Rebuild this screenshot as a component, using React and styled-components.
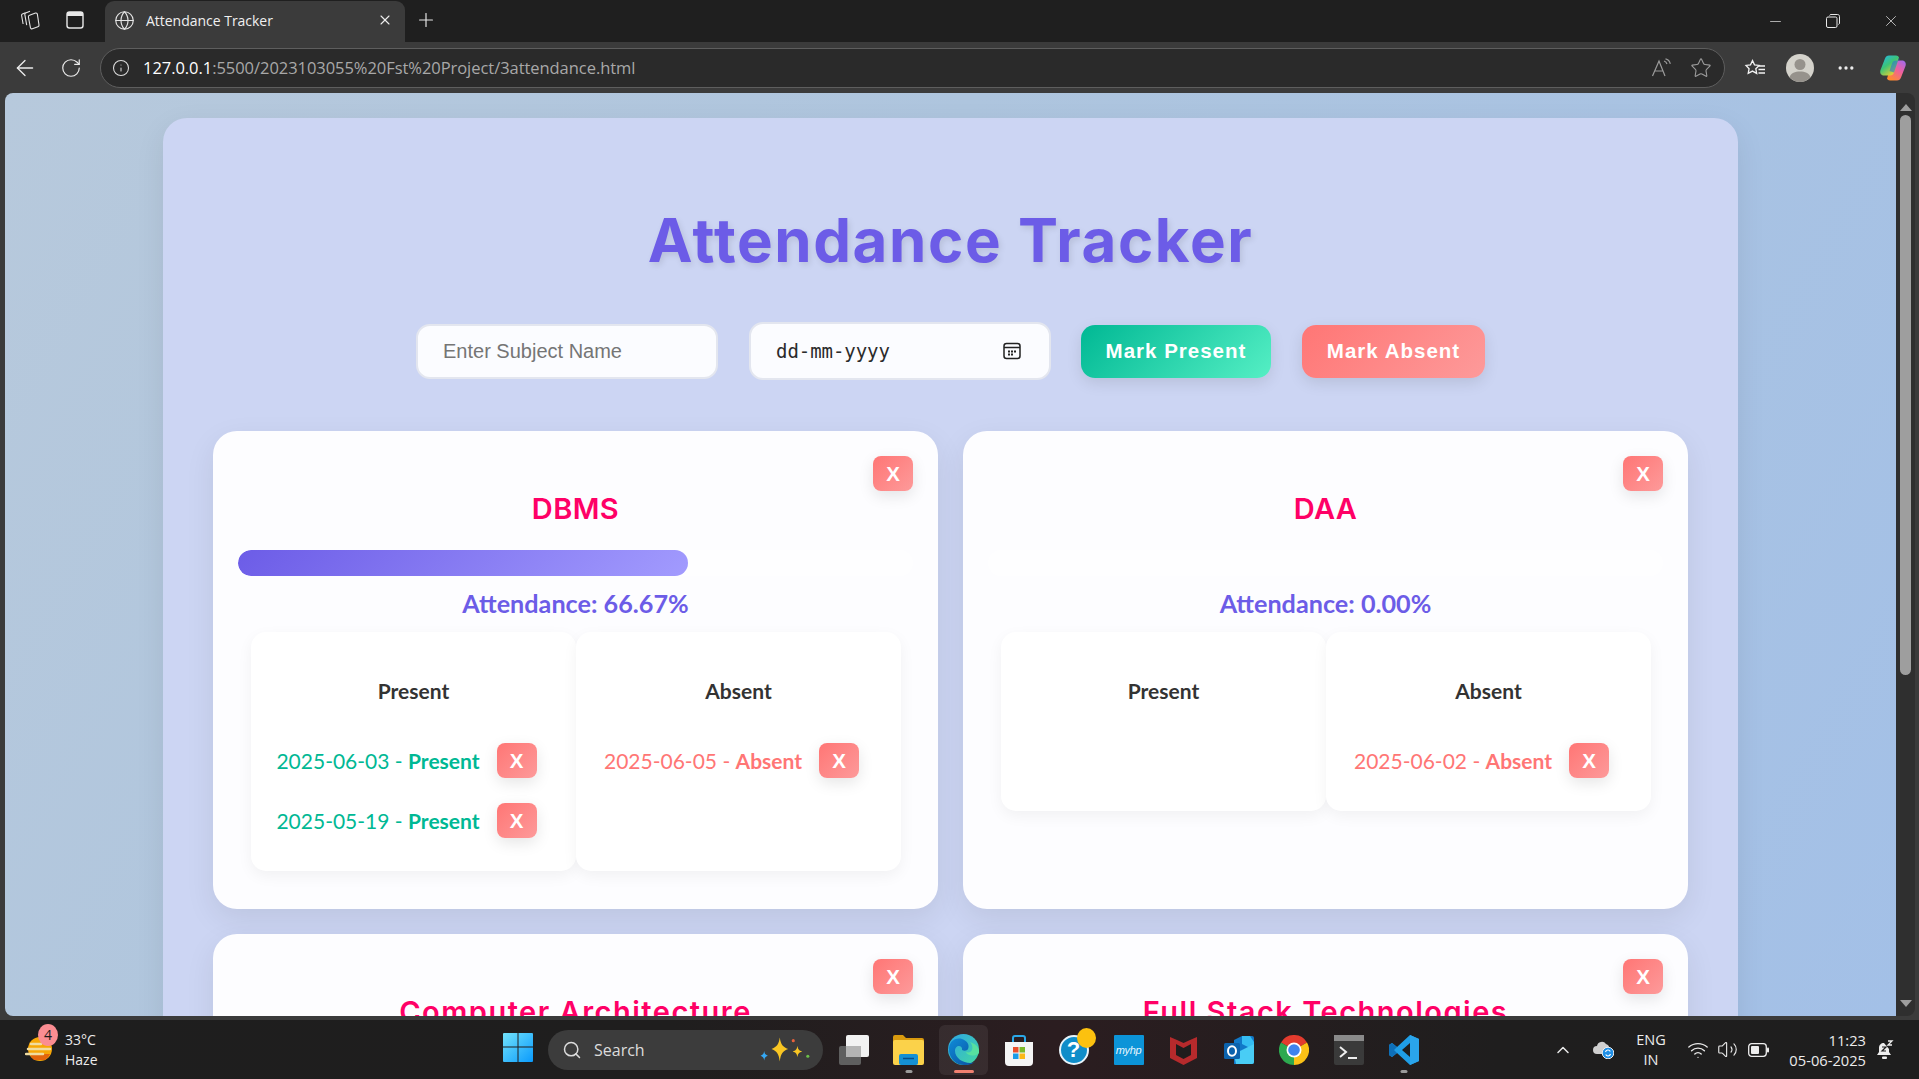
import styled, { createGlobalStyle } from "styled-components";
import {
  ArrowLeft, RotateCw, Info, Globe, X, Plus, Star, Minus, Search,
  ChevronUp, Wifi, Volume2, MoreHorizontal,
} from "lucide-react";

const GlobalStyle = createGlobalStyle`
  * { box-sizing: border-box; }
  html, body { margin: 0; height: 100%; overflow: hidden; }
  body { font-family: "Noto Sans", sans-serif; background: #3b3b3b; }
  #root { height: 100vh; }
`;

const Shell = styled.div`
  height: 100vh;
  display: flex;
  flex-direction: column;
`;

/* browser chrome */
const TabStrip = styled.div`
  height: 42px;
  flex: none;
  background: #1f1f1f;
  display: flex;
  align-items: stretch;
  color: #e6e6e6;
`;

const StripIcon = styled.div`
  width: ${(p) => p.$w || 45}px;
  display: flex;
  align-items: center;
  justify-content: center;
  flex: none;
  padding-bottom: 2px;
`;

const ActiveTab = styled.div`
  width: 300px;
  margin-left: ${(p) => p.$ml || 0}px;
  margin-top: 1px;
  background: #3b3b3b;
  border-radius: 9px 9px 0 0;
  display: flex;
  align-items: center;
  padding: 0 12px 3px 9px;
  flex: none;
`;

const TabTitle = styled.span`
  font-family: "Open Sans", sans-serif;
  font-size: 14px;
  letter-spacing: -0.02px;
  color: #f0f0f0;
  margin-left: 11px;
  flex: 1;
`;

const WindowButtons = styled.div`
  margin-left: auto;
  margin-right: -1px;
  display: flex;
  align-items: center;
`;

const WindowButton = styled.div`
  width: 58px;
  height: 40px;
  display: flex;
  align-items: center;
  justify-content: center;
`;

const Toolbar = styled.div`
  height: 51px;
  flex: none;
  background: #3b3b3b;
  display: flex;
  align-items: center;
  color: #ececec;
`;

const NavButton = styled.div`
  width: ${(p) => p.$w || 45}px;
  flex: none;
  display: flex;
  align-items: center;
  justify-content: center;
`;

const AddressBar = styled.div`
  width: 1625px;
  height: 40px;
  margin-left: 8px;
  flex: none;
  background: #2a2a2a;
  border: 1px solid #5e5e5e;
  border-radius: 20px;
  display: flex;
  align-items: center;
  padding-left: 11px;
  padding-right: 12px;
`;

const Url = styled.div`
  font-family: "Open Sans", sans-serif;
  font-size: 16.5px;
  letter-spacing: -0.05px;
  margin-left: 13px;
  color: #a8a8a8;
  flex: 1;
  white-space: nowrap;
  b { font-weight: 400; color: #fff; }
`;

const AddressIcons = styled.div`
  display: flex;
  align-items: center;
  gap: 17px;
  color: #9c9c9c;
`;

const ToolIcons = styled.div`
  display: flex;
  align-items: center;
  margin-left: 8px;
`;

const ToolIcon = styled.div`
  width: ${(p) => p.$w || 46}px;
  display: flex;
  justify-content: center;
  align-items: center;
`;

/* viewport */
const ViewRow = styled.div`
  flex: 1;
  min-height: 0;
  display: flex;
  padding: 0 4px 0 5px;
`;

const Viewport = styled.div`
  flex: 1;
  min-width: 0;
  overflow: hidden;
  border-radius: 8px 0 0 8px;
  background: linear-gradient(120deg, #b7c9dc 0%, #aec5de 40%, #a3c0e7 100%);
  padding-top: 25px;
`;

const ScrollTrack = styled.div`
  width: 19px;
  flex: none;
  background: #2f2f2f;
  border-radius: 0 8px 8px 0;
  display: flex;
  flex-direction: column;
  align-items: center;
  padding: 11px 0 9px;
`;

const ScrollArrow = styled.div`
  width: 0;
  height: 0;
  border-left: 6.5px solid transparent;
  border-right: 6.5px solid transparent;
  ${(p) => (p.$down ? "border-top: 7px solid #9e9e9e;" : "border-bottom: 7px solid #9e9e9e;")}
  ${(p) => p.$down && "margin-top: auto;"}
`;

const ScrollThumb = styled.div`
  width: 11px;
  height: 560px;
  margin-top: 4px;
  background: #9e9e9e;
  border-radius: 6px;
`;

/* the page */
const Panel = styled.main`
  width: 1575px;
  margin: 0 auto;
  background: #ccd5f3;
  border-radius: 24px 24px 0 0;
  padding: 50px 50px 60px;
  box-shadow: 0 10px 30px rgba(0, 0, 0, 0.08);
`;

const PageTitle = styled.h1`
  margin: 0 0 10px;
  text-align: center;
  font-family: Inter, sans-serif;
  font-size: 60px;
  font-weight: 700;
  line-height: 144px;
  height: 144px;
  letter-spacing: 1.6px;
  color: #6c5ce7;
  text-shadow: 2px 3px 6px rgba(0, 0, 0, 0.1);
`;

const Controls = styled.div`
  display: flex;
  justify-content: center;
  align-items: center;
  gap: 31px;
  height: 58px;
`;

const SubjectInput = styled.input`
  width: 302px;
  height: 55px;
  padding: 0 25px;
  border: 2px solid #e3e6ef;
  border-radius: 14px;
  background: #fbfcff;
  font-family: "Liberation Sans", Arial, sans-serif;
  font-size: 20px;
  outline: none;
  &::placeholder { color: #757575; opacity: 1; }
`;

const DateField = styled.div`
  width: 302px;
  height: 58px;
  margin-right: -1px;
  padding: 0 28px 0 25px;
  border: 2px solid #e3e6ef;
  border-radius: 14px;
  background: #fbfcff;
  display: flex;
  align-items: center;
  justify-content: space-between;
  font-family: "DejaVu Sans Mono", "Liberation Mono", monospace;
  font-size: 19px;
  letter-spacing: -0.05px;
  color: #2b2b2b;
`;

const ActionButton = styled.button`
  width: ${(p) => p.$w}px;
  height: 53px;
  border: none;
  border-radius: 14px;
  background: linear-gradient(135deg, ${(p) => p.$from}, ${(p) => p.$to});
  color: #fff;
  font-family: "Liberation Sans", Arial, sans-serif;
  font-weight: 700;
  font-size: 20.5px;
  letter-spacing: 1px;
  box-shadow: 0 5px 15px rgba(0, 0, 0, 0.1);
`;

const CardGrid = styled.div`
  display: grid;
  grid-template-columns: 1fr 1fr;
  gap: 25px;
  margin-top: 51px;
`;

const Card = styled.section`
  position: relative;
  background: #fdfdff;
  border-radius: 24px;
  padding: 25px 25px 38px;
  box-shadow: 0 10px 30px rgba(0, 0, 0, 0.08);
`;

const RemoveButton = styled.button`
  width: 40px;
  height: 35px;
  padding: 0;
  border: none;
  border-radius: 8px;
  background: linear-gradient(135deg, #ff7675, #fd9a9a);
  color: #fff;
  font-family: "Liberation Sans", Arial, sans-serif;
  font-weight: 700;
  font-size: 20.5px;
  flex: none;
  box-shadow: 0 5px 15px rgba(0, 0, 0, 0.1);
`;

const CardRemove = styled(RemoveButton)`
  position: absolute;
  top: 25px;
  right: 25px;
`;

const CardTitle = styled.h2`
  margin: 33px 0 0;
  text-align: center;
  font-family: Inter, sans-serif;
  font-size: 29px;
  font-weight: 600;
  line-height: 40px;
  letter-spacing: ${(p) => (p.$long ? 1.5 : 0.4)}px;
  color: #ff0066;
`;

const Track = styled.div`
  height: 26px;
  margin-top: 21px;
  border-radius: 13px;
  background: #fefeff;
  overflow: hidden;
`;

const Fill = styled.div`
  height: 100%;
  border-radius: 13px;
  background: linear-gradient(135deg, #6c5ce7, #a29bfe);
`;

const Percent = styled.p`
  margin: 12px 0 0;
  text-align: center;
  font-family: Lato, sans-serif;
  font-size: 25.2px;
  font-weight: 700;
  line-height: 30px;
  color: #6c5ce7;
`;

const Lists = styled.div`
  display: grid;
  grid-template-columns: 1fr 1fr;
  margin: 14px 12px 0 13px;
`;

const ListBox = styled.div`
  background: #fff;
  border-radius: 15px;
  padding: 44px 0 33px;
  box-shadow: 0 5px 15px rgba(0, 0, 0, 0.05);
`;

const ListTitle = styled.h3`
  margin: 0 0 37px;
  text-align: center;
  font-family: Lato, sans-serif;
  font-size: 21px;
  font-weight: 700;
  line-height: 30px;
  color: #333;
`;

const Entry = styled.div`
  display: flex;
  align-items: center;
  justify-content: center;
  gap: 17px;
  padding-right: 14px;
  height: 35px;
  & + & { margin-top: 25px; }
`;

const EntryText = styled.span`
  font-family: Lato, sans-serif;
  font-size: 21px;
  white-space: nowrap;
  color: ${(p) => p.$color};
  b { font-weight: 700; }
`;

/* taskbar */
const Taskbar = styled.footer`
  height: 63px;
  flex: none;
  border-top: 4px solid #3b3b3b;
  background: linear-gradient(90deg, #1e1e1e 0%, #1f1e1e 35%, #2b1d20 55%, #1f1e1e 78%, #1e1e1e 100%);
  display: flex;
  align-items: center;
  color: #e8e8e8;
  font-family: "Open Sans", sans-serif;
`;

const Weather = styled.div`
  width: 503px;
  flex: none;
  display: flex;
  align-items: center;
  padding-left: 25px;
  gap: 12px;
`;

const WeatherIcon = styled.div`
  position: relative;
  width: 28px;
  height: 28px;
`;

const Badge = styled.span`
  position: absolute;
  top: -12px;
  left: 13px;
  width: 20px;
  height: 22px;
  border-radius: 50%;
  background: #fb8d92;
  color: #1b1b1b;
  font-size: 14px;
  line-height: 22px;
  text-align: center;
`;

const TwoLines = styled.div`
  font-size: ${(p) => p.$size || 14}px;
  line-height: 20px;
  text-align: ${(p) => p.$align || "left"};
  color: #ececec;
  white-space: nowrap;
`;

const StartIcon = styled.div`
  width: 45px;
  flex: none;
`;

const SearchPill = styled.div`
  width: 275px;
  height: 40px;
  flex: none;
  border-radius: 20px;
  background: #3c3c3c;
  display: flex;
  align-items: center;
  padding: 0 10px 0 14px;
  color: #dcdcdc;
  font-size: 16px;
  gap: 12px;
`;

const PillLabel = styled.span`
  flex: 1;
`;

const TaskRow = styled.div`
  display: flex;
  margin-left: 3px;
`;

const TaskIcon = styled.div`
  position: relative;
  width: 55px;
  height: 50px;
  display: flex;
  align-items: center;
  justify-content: center;
  border-radius: 6px;
  ${(p) => p.$active && "background: rgba(255,255,255,0.07); width: 49px; margin: 0 3px;"}
  &::after {
    content: "";
    position: absolute;
    bottom: 2px;
    left: 50%;
    transform: translateX(-50%);
    height: 3px;
    border-radius: 2px;
    width: ${(p) => (p.$active ? 20 : p.$open ? 7 : 0)}px;
    background: ${(p) => (p.$active ? "#f08070" : "#9a9a9a")};
  }
`;

const Tray = styled.div`
  margin-left: auto;
  padding-right: 21px;
  display: flex;
  align-items: center;
`;

const TrayCell = styled.div`
  width: ${(p) => p.$w}px;
  margin-left: ${(p) => p.$ml || 0}px;
  flex: none;
  display: flex;
  justify-content: ${(p) => (p.$end ? "flex-end" : "center")};
`;

/* drawn icons */
const TabStack = () => (
  <svg width="22" height="22" viewBox="0 0 22 22" fill="none" stroke="#e4e4e4" strokeWidth="1.1">
    <path d="M6.500 3.800 3.400 5.100c-.6.3-.9.8-.8 1.400l1.500 8.500" />
    <path d="M11 2.300 6.600 4c-.6.3-.9.800-.8 1.400l1.900 10.800" />
    <path d="M10.500 6.300l6-2.200c.9-.3 1.700.3 1.900 1.200L20 16c.1.900-.3 1.500-1.100 1.800l-5.500 2c-1 .3-1.800-.1-2-1.100L9.400 8c-.2-.8.2-1.400 1.100-1.700z" />
  </svg>
);

const TabSide = () => (
  <svg width="20" height="20" viewBox="0 0 20 20" fill="none">
    <rect x="2" y="2" width="16" height="16" rx="2.500" stroke="#e8e8e8" strokeWidth="1.400" />
    <path d="M2 4.500A2.500 2.500 0 0 1 4.500 2h11A2.500 2.500 0 0 1 18 4.500V6H2z" fill="#e8e8e8" />
  </svg>
);

const Restore = () => (
  <svg width="14" height="14" viewBox="0 0 14 14" fill="none" stroke="#e8e8e8" strokeWidth="1">
    <rect x="0.500" y="3" width="10.500" height="10.500" rx="1.500" />
    <path d="M3.500 1.500c.3-.7.8-1 1.500-1h6.500c1.200 0 2 .8 2 2V9c0 .7-.4 1.200-1 1.500" />
  </svg>
);

const ReadAloud = () => (
  <svg width="22" height="20" viewBox="0 0 22 20" fill="none" stroke="#9c9c9c" strokeWidth="1.200">
    <path d="M1.500 18 8 3l6 15M4 13h8" />
    <path d="M13 3c1.600.4 2.600 1.500 3 3M14.500 0.800c2.600.6 4.200 2.400 4.800 5" />
  </svg>
);

const FavoriteList = () => (
  <svg width="22" height="20" viewBox="0 0 22 20" fill="none" stroke="#f2f2f2" strokeWidth="1.300">
    <path d="M8.500 2.500l2 4.300 4.700.6-3.400 3.300.9 4.700-4.200-2.300-4.300 2.300.9-4.700L2 7.400l4.500-.6z" />
    <path d="M14.500 8H21M14.500 11.500H21M14.500 15H21" />
  </svg>
);

const Profile = () => (
  <svg width="28" height="28" viewBox="0 0 28 28">
    <circle cx="14" cy="14" r="14" fill="#d4d2cb" />
    <circle cx="14" cy="10.500" r="5.500" fill="#96928c" />
    <path d="M3.500 23.200C5 19 9 17.500 14 17.500s9 1.500 10.500 5.700A14 14 0 0 1 14 28 14 14 0 0 1 3.500 23.200z" fill="#96928c" />
  </svg>
);

const Copilot = () => (
  <svg width="28" height="26" viewBox="0 0 28 26">
    <defs>
      <linearGradient id="copA" x1="0" y1="0" x2="0.700" y2="1">
        <stop offset="0" stopColor="#23b6f2" />
        <stop offset="0.5" stopColor="#3cc477" />
        <stop offset="1" stopColor="#f5d02c" />
      </linearGradient>
      <linearGradient id="copB" x1="1" y1="0" x2="0.300" y2="1">
        <stop offset="0" stopColor="#9a6cf2" />
        <stop offset="0.5" stopColor="#ee5fa0" />
        <stop offset="1" stopColor="#ff8a30" />
      </linearGradient>
    </defs>
    <path d="M18 25.500h-7c-1.500 0-2.500-.8-3-2l5-15c.6-2 2-3 4-3h6c3 0 4.500 2.500 3.500 5.500L22 22.500c-.7 2-2 3-4 3z" fill="url(#copB)" />
    <path d="M10 .5h7c1.500 0 2.500.8 3 2l-5 15c-.6 2-2 3-4 3H5c-3 0-4.500-2.500-3.500-5.500L6 3.500C6.700 1.500 8 .5 10 .5z" fill="url(#copA)" />
    <path d="M20 2.500c.4 1 .6 2 .6 3H17c-2 0-3.400 1-4 3l-2.500 7.500 4.500 1.500z" fill="#1d6fd8" opacity="0.55" />
  </svg>
);

const CalendarGlyph = () => (
  <svg width="18" height="18" viewBox="0 0 18 18" fill="none">
    <rect x="1" y="1.500" width="16" height="15" rx="2.500" stroke="#222" strokeWidth="1.500" />
    <path d="M1 5.500h16" stroke="#222" strokeWidth="1.500" />
    <path d="M5 8.500h2v2H5zM8 8.500h2v2H8zM11 8.500h2v2h-2zM5 11.500h2v2H5zM8 11.500h2v2H8z" fill="#222" />
  </svg>
);

const HazeSun = () => (
  <svg width="28" height="28" viewBox="0 0 28 28">
    <circle cx="15" cy="13" r="12" fill="#f7a707" />
    <path d="M5 18h20a11 11 0 0 1-5 6H9a11 11 0 0 1-4-6z" fill="#e3650c" />
    <g stroke="#f0dca0" strokeWidth="2.500" strokeLinecap="round">
      <path d="M6 8h10" />
      <path d="M3 13h22" />
      <path d="M1 18h17" />
    </g>
  </svg>
);

const WinLogo = () => (
  <svg width="30" height="30" viewBox="0 0 30 30">
    <defs>
      <linearGradient id="win" x1="0" y1="0" x2="1" y2="1">
        <stop offset="0" stopColor="#72e3fb" />
        <stop offset="1" stopColor="#0a9afc" />
      </linearGradient>
    </defs>
    <path d="M1 1h13.500v13.500H0V2a1 1 0 0 1 1-1zM15.500 1H29a1 1 0 0 1 1 1v12.500H15.500zM0 15.500h14.500V30H1a1 1 0 0 1-1-1zM15.500 15.500H30V29a1 1 0 0 1-1 1H15.500z" fill="url(#win)" />
  </svg>
);

const Sparkles = () => (
  <svg width="54" height="28" viewBox="0 0 52 26">
    <path d="M20 1c1 7 3 9 8 11-5 2-7 4-8 12-1-8-3-10-8-12 5-2 7-4 8-11z" fill="#f9c623" />
    <path d="M37 9c.5 3.500 1.500 4.500 4.500 5.500-3 1-4 2-4.500 5.500-.5-3.500-1.500-4.500-4.500-5.500 3-1 4-2 4.500-5.500z" fill="#f9c623" />
    <path d="M5 14c.4 2.500 1 3.500 3.500 4.500-2.500 1-3.100 2-3.500 4.500-.4-2.500-1-3.500-3.500-4.500 2.500-1 3.100-2 3.500-4.500z" fill="#35a8f4" />
    <circle cx="33" cy="4" r="1.500" fill="#e8613c" />
    <circle cx="47" cy="19" r="1.500" fill="#6cc04a" />
  </svg>
);

const TaskView = () => (
  <svg width="30" height="30" viewBox="0 0 30 30">
    <rect x="0" y="11" width="22" height="19" rx="2" fill="#5f5f5f" />
    <rect x="7" y="0" width="23" height="22" rx="2" fill="#f2f2f2" />
    <rect x="7" y="11" width="15" height="11" fill="#b4b4b4" />
  </svg>
);

const Explorer = () => (
  <svg width="31" height="30" viewBox="0 0 31 30">
    <path d="M0 2a2 2 0 0 1 2-2h8l3 3h16a2 2 0 0 1 2 2v6H0z" fill="#d99a0e" />
    <rect x="0" y="5" width="31" height="25" rx="2" fill="#fbd24a" />
    <rect x="6" y="19" width="19" height="11" rx="2" fill="#1590d4" />
    <path d="M10 23.500h11" stroke="#0a4d88" strokeWidth="1.500" />
  </svg>
);

const Edge = () => (
  <svg width="31" height="31" viewBox="0 0 31 31">
    <defs>
      <linearGradient id="edgeA" x1="0" y1="0" x2="1" y2="1">
        <stop offset="0" stopColor="#2ea6e6" />
        <stop offset="1" stopColor="#43d8a0" />
      </linearGradient>
      <linearGradient id="edgeB" x1="0" y1="0" x2="1" y2="1">
        <stop offset="0" stopColor="#0f8bd8" />
        <stop offset="1" stopColor="#0a4f9e" />
      </linearGradient>
    </defs>
    <circle cx="15.500" cy="15.500" r="15.500" fill="url(#edgeA)" />
    <path d="M1 17C0 8 7 3 14 5c5 1.500 8 6 6 10-1 2-4 2-6 1 1-5-7-6-7 1 0 7 8 12 15 12 3 0 5-1 6-2-4 4-9 4-12 4C8 31 2 25 1 17z" fill="url(#edgeB)" />
    <path d="M31 19c-4 4-12 3-13-1 3 1 5 0 6-2 1-3 0-6-2-8 6 2 10 6 9 11z" fill="#57e0a0" />
  </svg>
);

const Store = () => (
  <svg width="30" height="32" viewBox="0 0 30 32">
    <path d="M9 8V4a2 2 0 0 1 2-2h8a2 2 0 0 1 2 2v4" fill="none" stroke="#2aa8e8" strokeWidth="2" />
    <path d="M1 8h28v20a4 4 0 0 1-4 4H5a4 4 0 0 1-4-4z" fill="#f4f4f4" />
    <rect x="9" y="13" width="5.500" height="5.500" fill="#ea4f2a" />
    <rect x="15.500" y="13" width="5.500" height="5.500" fill="#7cb82a" />
    <rect x="9" y="19.500" width="5.500" height="5.500" fill="#1a9ce8" />
    <rect x="15.500" y="19.500" width="5.500" height="5.500" fill="#fbb818" />
  </svg>
);

const Mcafee = () => (
  <svg width="27" height="30" viewBox="0 0 27 30">
    <path d="M0 2l7 3 6.500 3L20 5l7-3v21l-13.500 7L0 23z" fill="#b62a2c" />
    <path d="M6 9v11l7.500 4 7.500-4V9l-7.500 4z" fill="#1f1c1c" />
  </svg>
);

const Outlook = () => (
  <svg width="30" height="28" viewBox="0 0 30 28">
    <path d="M10 4l8-4h10a2 2 0 0 1 2 2v24a2 2 0 0 1-2 2H10z" fill="#1178c8" />
    <path d="M18 0h8l4 6v8l-12-6z" fill="#35bdf2" />
    <path d="M10 18l20-10v18a2 2 0 0 1-2 2H12z" fill="#49cdf5" />
    <rect x="0" y="7" width="16" height="16" rx="1.500" fill="#0c63ad" />
    <ellipse cx="8" cy="15" rx="4" ry="4.800" fill="none" stroke="#fff" strokeWidth="2" />
  </svg>
);

const Chrome = () => (
  <svg width="30" height="30" viewBox="0 0 30 30">
    <path d="M15 15 2 7.500A15 15 0 0 1 28 7.500z" fill="#e33b2e" />
    <path d="M15 15 28 7.500A15 15 0 0 1 15 30z" fill="#fbc116" />
    <path d="M15 15 15 30A15 15 0 0 1 2 7.500z" fill="#2da94f" />
    <circle cx="15" cy="15" r="7.500" fill="#fff" />
    <circle cx="15" cy="15" r="5.800" fill="#3f83ee" />
  </svg>
);

const Terminal = () => (
  <svg width="30" height="30" viewBox="0 0 30 30" fill="none">
    <rect width="30" height="30" rx="2" fill="#3a3a3a" />
    <rect width="30" height="6" fill="#8a8a8a" />
    <path d="M6 12l6 5-6 5" stroke="#eee" strokeWidth="2" />
    <path d="M14 23h9" stroke="#eee" strokeWidth="2" />
  </svg>
);

const VsCode = () => (
  <svg width="30" height="30" viewBox="0 0 30 30">
    <path d="M21 0l9 4v22l-9 4L8 18l-5 4-3-2v-10l3-2 5 4z" fill="#1f9ee6" />
    <path d="M21 8l-8 7 8 7z" fill="#1e1e1e" />
    <path d="M21 0l9 4v22l-9 4z" fill="#2aa5ec" />
    <path d="M3 8l5 4-3 3 3 3-5 4-3-2v-10z" fill="#0e6fb8" />
  </svg>
);

const HelpBubble = styled.div`
  position: relative;
  width: 30px;
  height: 30px;
  border-radius: 50%;
  background: #0f8dc9;
  border: 2px solid #e8f4fa;
  color: #fff;
  font-family: "Liberation Sans", sans-serif;
  font-weight: 700;
  font-size: 22px;
  line-height: 26px;
  text-align: center;
  &::after {
    content: "";
    position: absolute;
    top: -9px;
    right: -9px;
    width: 19px;
    height: 20px;
    border-radius: 50%;
    background: #fcc10f;
  }
`;

const MyHp = styled.div`
  width: 30px;
  height: 30px;
  border-radius: 1px;
  background: #0c94d8;
  color: #e8f6fd;
  font-family: "Liberation Sans", sans-serif;
  font-style: italic;
  font-size: 11px;
  line-height: 30px;
  text-align: center;
  letter-spacing: -0.4px;
`;

const CloudSync = () => (
  <svg width="21" height="18" viewBox="0 0 21 18">
    <path d="M4 13a4 4 0 0 1 0-8 5 5 0 0 1 9-2 4 4 0 0 1 3 5v5z" fill="#cfcfcf" />
    <circle cx="15" cy="12" r="5.800" fill="#1f8fe6" stroke="#eee" strokeWidth="1" />
    <path d="M12.500 11a2.600 2.600 0 0 1 4.800-.6M17.500 13a2.600 2.600 0 0 1-4.800.6" stroke="#fff" strokeWidth="1.100" fill="none" />
  </svg>
);

const Battery = () => (
  <svg width="21" height="14" viewBox="0 0 21 14">
    <rect x="0.700" y="0.700" width="17.600" height="12.600" rx="3" fill="none" stroke="#eee" strokeWidth="1.300" />
    <rect x="3" y="3" width="8" height="8" rx="1" fill="#eee" />
    <rect x="19" y="4.500" width="2" height="5" rx="1" fill="#eee" />
  </svg>
);

const BellSnooze = () => (
  <svg width="18" height="20" viewBox="0 0 18 20">
    <path d="M8 3c-3 0-5 2-5 5v4l-2 3h14l-2-3V9" fill="#eee" />
    <rect x="6" y="16.500" width="5" height="2.500" rx="1" fill="#eee" />
    <path d="M6 7h4l-4 4h4" stroke="#1e1e1e" strokeWidth="1.200" fill="none" />
    <path d="M12 1h4l-4 4h4" stroke="#eee" strokeWidth="1.300" fill="none" />
  </svg>
);

const cards = [
  {
    name: "DBMS",
    percent: 66.67,
    present: ["2025-06-03", "2025-05-19"],
    absent: ["2025-06-05"],
  },
  { name: "DAA", percent: 0, present: [], absent: ["2025-06-02"] },
  { name: "Computer Architecture", percent: 0, present: [], absent: [] },
  { name: "Full Stack Technologies", percent: 0, present: [], absent: [] },
];

const AttendanceList = ({ title, dates, color }) => (
  <ListBox>
    <ListTitle>{title}</ListTitle>
    {dates.map((d) => (
      <Entry key={d}>
        <EntryText $color={color}>
          {d} - <b>{title}</b>
        </EntryText>
        <RemoveButton>X</RemoveButton>
      </Entry>
    ))}
  </ListBox>
);

const SubjectCard = ({ card }) => (
  <Card>
    <CardRemove>X</CardRemove>
    <CardTitle $long={card.name.length > 10}>{card.name}</CardTitle>
    <Track>
      <Fill style={{ width: `${card.percent}%` }} />
    </Track>
    <Percent>Attendance: {card.percent.toFixed(2)}%</Percent>
    <Lists>
      <AttendanceList title="Present" dates={card.present} color="#00b894" />
      <AttendanceList title="Absent" dates={card.absent} color="#ff7675" />
    </Lists>
  </Card>
);

const App = () => (
  <Shell>
    <GlobalStyle />
    <TabStrip>
      <StripIcon $w={60}><TabStack /></StripIcon>
      <StripIcon $w={30}><TabSide /></StripIcon>
      <ActiveTab $ml={15}>
        <Globe size={21} strokeWidth={1.3} color="#e4e4e4" />
        <TabTitle>Attendance Tracker</TabTitle>
        <X size={16} strokeWidth={1.6} color="#eee" />
      </ActiveTab>
      <StripIcon $w={42}><Plus size={22} strokeWidth={1.3} /></StripIcon>
      <WindowButtons>
        <WindowButton><Minus size={17} strokeWidth={1} /></WindowButton>
        <WindowButton><Restore /></WindowButton>
        <WindowButton><X size={18} strokeWidth={1} /></WindowButton>
      </WindowButtons>
    </TabStrip>
    <Toolbar>
      <NavButton $w={49}><ArrowLeft size={26} strokeWidth={1.2} /></NavButton>
      <NavButton $w={43}><RotateCw size={22} strokeWidth={1.3} /></NavButton>
      <AddressBar>
        <Info size={18} strokeWidth={1.4} color="#ddd" />
        <Url><b>127.0.0.1</b>:5500/2023103055%20Fst%20Project/3attendance.html</Url>
        <AddressIcons>
          <ReadAloud />
          <Star size={22} strokeWidth={1.2} />
        </AddressIcons>
      </AddressBar>
      <ToolIcons>
        <ToolIcon $w={44}><FavoriteList /></ToolIcon>
        <ToolIcon $w={46}><Profile /></ToolIcon>
        <ToolIcon $w={45}><MoreHorizontal size={20} strokeWidth={2} /></ToolIcon>
        <ToolIcon $w={50}><Copilot /></ToolIcon>
      </ToolIcons>
    </Toolbar>
    <ViewRow>
      <Viewport>
        <Panel>
          <PageTitle>Attendance Tracker</PageTitle>
          <Controls>
            <SubjectInput placeholder="Enter Subject Name" />
            <DateField>
              dd-mm-yyyy
              <CalendarGlyph />
            </DateField>
            <ActionButton $w={190} $from="#00b894" $to="#55efc4">Mark Present</ActionButton>
            <ActionButton $w={183} $from="#ff7675" $to="#fd9a9a">Mark Absent</ActionButton>
          </Controls>
          <CardGrid>
            {cards.map((c) => (
              <SubjectCard key={c.name} card={c} />
            ))}
          </CardGrid>
        </Panel>
      </Viewport>
      <ScrollTrack>
        <ScrollArrow />
        <ScrollThumb />
        <ScrollArrow $down />
      </ScrollTrack>
    </ViewRow>
    <Taskbar>
      <Weather>
        <WeatherIcon>
          <HazeSun />
          <Badge>4</Badge>
        </WeatherIcon>
        <TwoLines>33°C<br />Haze</TwoLines>
      </Weather>
      <StartIcon><WinLogo /></StartIcon>
      <SearchPill>
        <Search size={20} strokeWidth={1.8} />
        <PillLabel>Search</PillLabel>
        <Sparkles />
      </SearchPill>
      <TaskRow>
        <TaskIcon><TaskView /></TaskIcon>
        <TaskIcon $open><Explorer /></TaskIcon>
        <TaskIcon $active><Edge /></TaskIcon>
        <TaskIcon><Store /></TaskIcon>
        <TaskIcon><HelpBubble>?</HelpBubble></TaskIcon>
        <TaskIcon><MyHp>myhp</MyHp></TaskIcon>
        <TaskIcon><Mcafee /></TaskIcon>
        <TaskIcon><Outlook /></TaskIcon>
        <TaskIcon><Chrome /></TaskIcon>
        <TaskIcon><Terminal /></TaskIcon>
        <TaskIcon $open><VsCode /></TaskIcon>
      </TaskRow>
      <Tray>
        <TrayCell $w={26}><ChevronUp size={20} strokeWidth={1.8} /></TrayCell>
        <TrayCell $w={54}><CloudSync /></TrayCell>
        <TrayCell $w={42}><TwoLines $align="center" $size={14.5}>ENG<br />IN</TwoLines></TrayCell>
        <TrayCell $w={32} $ml={10}><Wifi size={22} strokeWidth={1.5} /></TrayCell>
        <TrayCell $w={26}><Volume2 size={21} strokeWidth={1.3} /></TrayCell>
        <TrayCell $w={36}><Battery /></TrayCell>
        <TrayCell $w={90} $end><TwoLines $align="right" $size={14.7}>11:23<br />05-06-2025</TwoLines></TrayCell>
        <TrayCell $w={26} $ml={6}><BellSnooze /></TrayCell>
      </Tray>
    </Taskbar>
  </Shell>
);

export default App;
